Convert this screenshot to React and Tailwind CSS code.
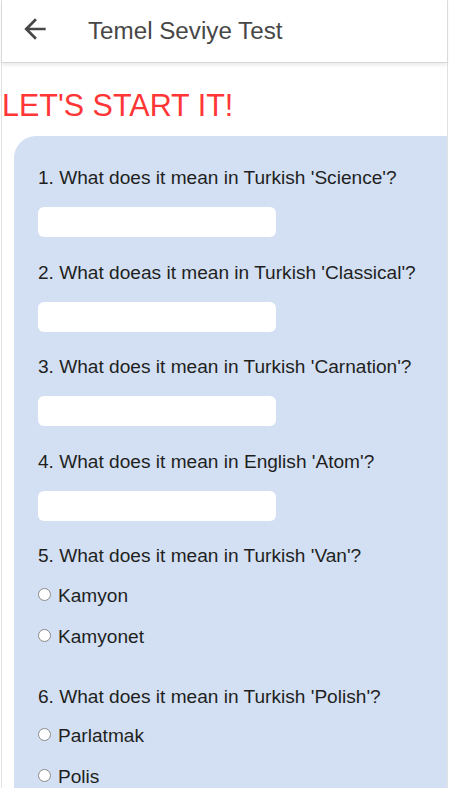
import React from 'react';

const questions = [
  { id: 1, text: "1. What does it mean in Turkish 'Science'?", type: 'text' },
  { id: 2, text: "2. What doeas it mean in Turkish 'Classical'?", type: 'text' },
  { id: 3, text: "3. What does it mean in Turkish 'Carnation'?", type: 'text' },
  { id: 4, text: "4. What does it mean in English 'Atom'?", type: 'text' },
  { id: 5, text: "5. What does it mean in Turkish 'Van'?", type: 'radio', options: ['Kamyon', 'Kamyonet'] },
  { id: 6, text: "6. What does it mean in Turkish 'Polish'?", type: 'radio', options: ['Parlatmak', 'Polis'] },
];

const BackArrow = () => (
  <svg width="32" height="32" viewBox="0 0 24 24" fill="#474747">
    <path d="M20 11H7.83l5.59-5.59L12 4l-8 8 8 8 1.41-1.41L7.83 13H20v-2z" />
  </svg>
);

const Radio = ({ label, className }) => (
  <label className={`flex items-start h-[22px] ${className}`}>
    <span className="mt-[3px] w-[13px] h-[13px] rounded-full border border-[#8a8a8a] bg-white shrink-0" />
    <span className="ml-[7px] leading-[22px]">{label}</span>
  </label>
);

const App = () => {
  return (
    <div className="ml-[1px] w-[447px] min-h-[788px] bg-white border-x border-[#e2e2e2] font-['Liberation_Sans',Arial,sans-serif]">
      {/* app bar */}
      <header className="h-[63px] flex items-center border-b border-[#d6d6d6] shadow-[0_2px_4px_rgba(0,0,0,0.09)]">
        <div className="ml-[17px] -mt-[4px]">
          <BackArrow />
        </div>
        <h1 className="ml-[37px] text-[24.2px] text-[#474747]">Temel Seviye Test</h1>
      </header>

      <h2 className="pt-[24px] text-[30.5px] leading-[36px] text-[#ff3636]">LET'S START IT!</h2>

      <div className="mt-[13px] ml-[12px] bg-[#d3dff2] rounded-tl-[22px] pl-[24px] pt-[31px] pb-[60px] text-[19.1px] text-[#1f1f1f]">
        {questions.map((q, i) => (
          <div key={q.id} className="flex flex-col">
            {q.type === 'text' ? (
              <>
                <p className={`leading-[22px] ${i > 0 ? 'mt-[24.5px]' : ''}`}>{q.text}</p>
                <div className="mt-[18px] w-[238px] h-[30px] rounded-[6px] bg-white" />
              </>
            ) : (
              <>
                <p className={`leading-[22px] ${q.id === 5 ? 'mt-[24.5px]' : 'mt-[38px]'}`}>{q.text}</p>
                <Radio label={q.options[0]} className="mt-[17.5px]" />
                <Radio label={q.options[1]} className="mt-[19px]" />
              </>
            )}
          </div>
        ))}
      </div>
    </div>
  );
};

export default App;
